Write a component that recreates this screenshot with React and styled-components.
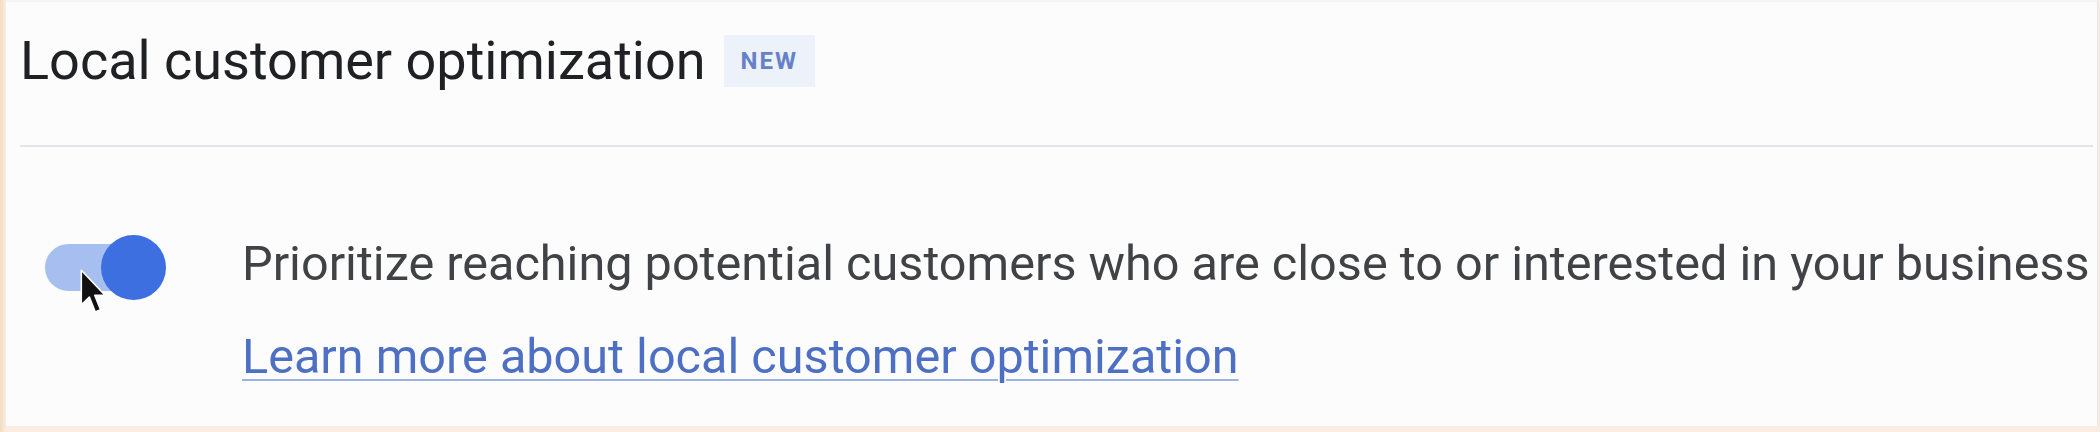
import styled, { createGlobalStyle } from "styled-components";

const GlobalStyle = createGlobalStyle`
    html, body {
        margin: 0;
        padding: 0;
        background: linear-gradient(90deg, #f3dcc2 0px, #f9ece0 6px);
        font-family: Roboto, "Noto Sans", "Liberation Sans", sans-serif;
    }
`;

const Card = styled.section`
    box-sizing: border-box;
    height: 426px;
    margin: 0 2px 6px 6px;
    background: #fcfcfd;
    border-top: 2px solid #f3f4f6;
    border-right: 1px solid #e4e5e9;
`;

const Header = styled.div`
    display: flex;
    align-items: center;
    margin: 0 4px 0 14px;
    padding: 19px 0 44px;
    border-bottom: 2px solid #e3e4e8;
`;

const Title = styled.h2`
    margin: 0;
    font-size: 54px;
    line-height: 80px;
    font-weight: 400;
    color: #202124;
`;

const Badge = styled.span`
    margin-left: 18px;
    padding: 0 17px;
    height: 52px;
    display: inline-flex;
    align-items: center;
    background: #edf1fa;
    color: #6582c9;
    font-size: 24px;
    font-weight: 700;
    letter-spacing: 2px;
`;

const Body = styled.div`
    display: flex;
    align-items: flex-start;
    padding: 80px 0 0 39px;
`;

const SwitchRoot = styled.div`
    position: relative;
    flex: none;
    width: 121px;
    height: 65px;
    margin: 8px 76px 0 0;
`;

const Track = styled.div`
    margin-top: 9px;
    width: 115px;
    height: 47px;
    border-radius: 24px;
    background: #a7bef0;
`;

const Knob = styled.div`
    position: absolute;
    top: 0;
    right: 0;
    width: 65px;
    height: 65px;
    border-radius: 50%;
    background: ${({ on }) => (on ? "#3d6fe0" : "#f1f1f1")};
`;

const Pointer = styled.svg`
    position: absolute;
    left: 34px;
    top: 33px;
    width: 27px;
    height: 47px;
    filter: blur(0.6px);
`;

const Copy = styled.div`
    display: flex;
    flex-direction: column;
    gap: 20px;
`;

const Description = styled.p`
    margin: 0;
    font-size: 48.6px;
    line-height: 73px;
    color: #404245;
    white-space: nowrap;
`;

const LearnLink = styled.a`
    font-size: 48.6px;
    line-height: 73px;
    color: #4d6fc4;
    text-decoration: underline;
    text-decoration-color: #9fb2e4;
    text-decoration-thickness: 2px;
    text-underline-offset: 6px;
    white-space: nowrap;
`;

function Switch({ on }) {
    return (
        <SwitchRoot>
            <Track />
            <Knob on={on} />
            {/* mouse pointer resting on the switch */}
            <Pointer viewBox="0 0 12 21">
                <path
                    d="M1 1 L1 16.5 L4.6 13 L7.2 19.6 L9.6 18.6 L7 12.2 L11.6 12.2 Z"
                    fill="#111"
                    stroke="#fff"
                    strokeWidth="0.7"
                    strokeLinejoin="round"
                />
            </Pointer>
        </SwitchRoot>
    );
}

export default function App() {
    return (
        <>
            <GlobalStyle />
            <Card>
                <Header>
                    <Title>Local customer optimization</Title>
                    <Badge>NEW</Badge>
                </Header>
                <Body>
                    <Switch on />
                    <Copy>
                        <Description>
                            Prioritize reaching potential customers who are close to or interested in your business
                        </Description>
                        <div>
                            <LearnLink href="#">Learn more about local customer optimization</LearnLink>
                        </div>
                    </Copy>
                </Body>
            </Card>
        </>
    );
}
